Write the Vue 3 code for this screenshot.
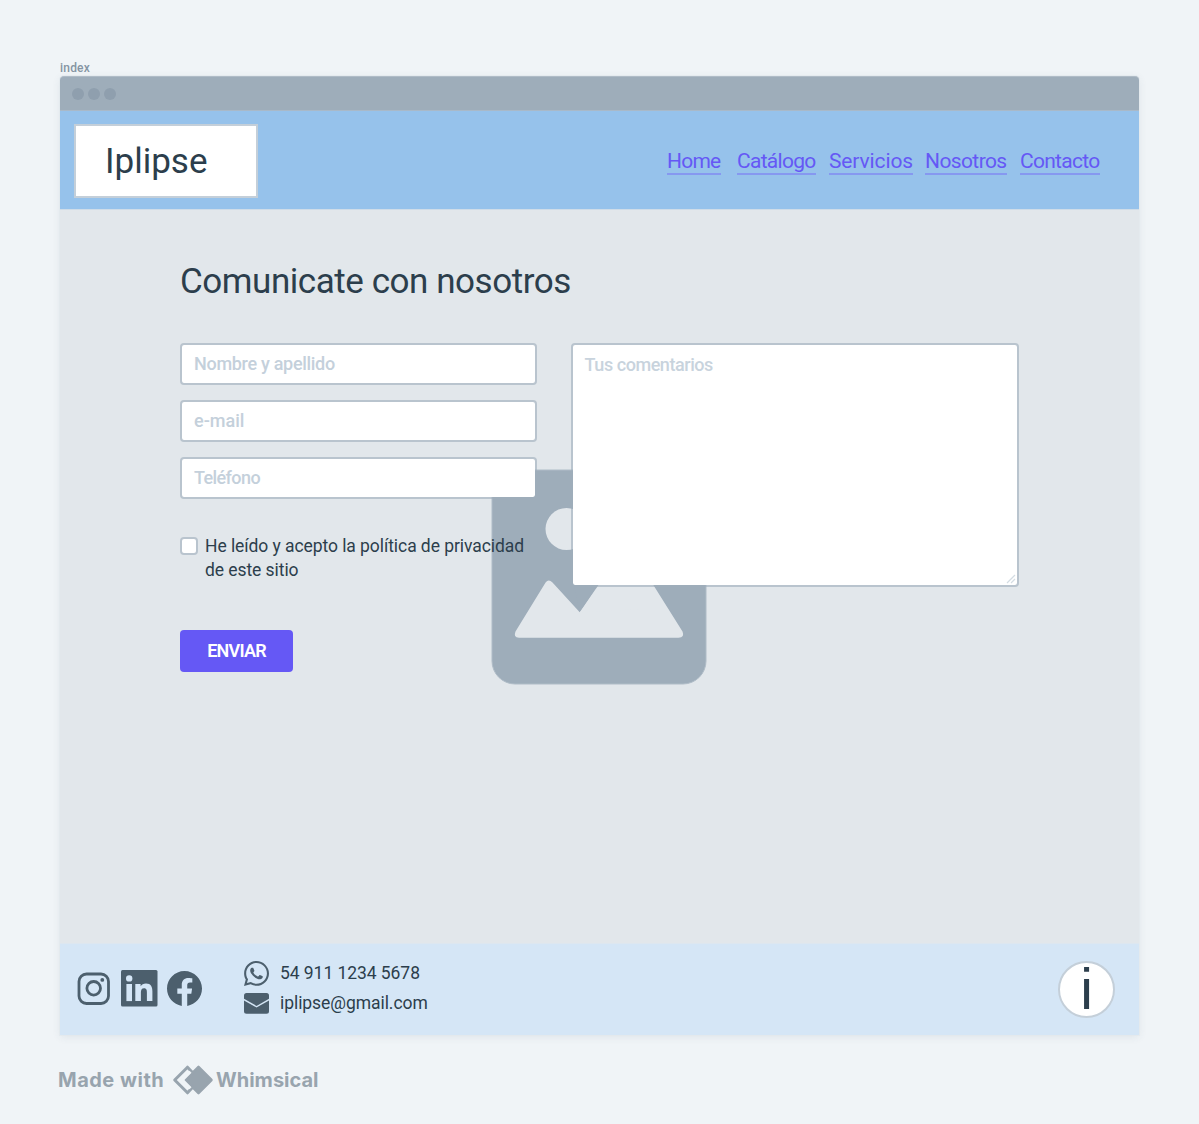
<script setup>
const links = [
  { label: 'Home', width: 54, gap: 16, spacing: -0.75 },
  { label: 'Catálogo', width: 79, gap: 13, spacing: -0.7 },
  { label: 'Servicios', width: 84, gap: 12, spacing: -0.12 },
  { label: 'Nosotros', width: 82, gap: 13, spacing: -0.6 },
  { label: 'Contacto', width: 80, gap: 0, spacing: -0.72 },
]
const fields = [
  { label: 'Nombre y apellido', spacing: -0.3 },
  { label: 'e-mail', spacing: 0 },
  { label: 'Teléfono', spacing: -0.6 },
]
</script>

<template>
  <div class="canvas">
    <div class="frame-label">index</div>
    <div class="window">
      <div class="titlebar"><i></i><i></i><i></i></div>
      <header class="header">
        <div class="brand"><span>Iplipse</span></div>
        <nav class="nav">
          <a
            v-for="l in links"
            :key="l.label"
            :style="{ width: l.width + 'px', marginRight: l.gap + 'px', letterSpacing: l.spacing + 'px' }"
          >{{ l.label }}</a>
        </nav>
      </header>

      <main class="main">
        <svg class="placeholder" width="216" height="216" viewBox="0 0 216 216">
          <rect x="1" y="1" width="214" height="214" rx="23" fill="#9eadba" stroke="#afbcc7" stroke-width="1" />
          <circle cx="75.500" cy="60" r="21" fill="#e2e7eb" />
          <path
            d="M54.600 113.500 L24.500 162.500 Q22 168.500 28 168.700 H187.500 Q194 168.500 191.500 162.500 L146 90 Q142 86 138 90 L88.500 143 L61.500 113.500 Q57.500 109.500 54.600 113.500Z"
            fill="#e2e7eb"
          />
          <path d="M88.500 143.500 L127 85 H150 L150 140Z" fill="#e2e7eb" />
          <path d="M88.500 143.200 L107.500 116 V100 H80 Z" fill="#9eadba" />
        </svg>
        <h1>Comunicate con nosotros</h1>
        <form class="form" @submit.prevent>
          <div class="left">
            <div v-for="f in fields" :key="f.label" class="field">
              <span :style="{ letterSpacing: f.spacing + 'px' }">{{ f.label }}</span>
            </div>
            <div class="consent">
              <span class="box"></span>
              <p>He leído y acepto la política de privacidad<br />de este sitio</p>
            </div>
            <button class="send" type="submit">ENVIAR</button>
          </div>
          <div class="comments">
            <span>Tus comentarios</span>
            <svg class="grip" width="10" height="10" viewBox="0 0 10 10">
              <path d="M1 9 L9 1 M5 9 L9 5" stroke="#d3dce3" stroke-width="1.200" fill="none" />
            </svg>
          </div>
        </form>
      </main>

      <footer class="footer">
        <div class="social">
          <svg class="instagram" width="33" height="33" viewBox="0 0 33 33" fill="none" stroke="#4c5f6d" stroke-width="2.800">
            <rect x="2" y="2" width="29.500" height="29.500" rx="7.500" />
            <circle cx="16.700" cy="16.300" r="6.800" />
            <circle cx="25.300" cy="7.900" r="1.900" fill="#4c5f6d" stroke="none" />
          </svg>
          <svg class="linkedin" width="37" height="37" viewBox="0 0 37 37">
            <rect width="36.500" height="36.500" rx="1.500" fill="#4c5f6d" />
            <g fill="#d5e6f6">
              <circle cx="8.200" cy="8.400" r="3.200" />
              <path d="M5.400 14H11V31.100H5.400Z" />
              <path d="M14.300 14H19.600V16.300C20.500 14.700 22.500 13.500 25 13.500C30 13.500 31.400 16.800 31.400 21.500V31.100H25.900V22.700C25.900 20.600 25.700 18.300 23.100 18.300C20.500 18.300 19.900 20.300 19.900 22.600V31.100H14.300Z" />
            </g>
          </svg>
          <svg class="facebook" width="35" height="35" viewBox="0 0 24 24">
            <path
              fill="#4c5f6d"
              d="M24 12.073c0-6.627-5.373-12-12-12s-12 5.373-12 12c0 5.990 4.388 10.954 10.125 11.854v-8.385H7.078v-3.470h3.047V9.430c0-3.007 1.792-4.669 4.533-4.669 1.312 0 2.686.235 2.686.235v2.953H15.830c-1.491 0-1.956.925-1.956 1.874v2.250h3.328l-.532 3.470h-2.796v8.385C19.612 23.027 24 18.062 24 12.073z"
            />
          </svg>
        </div>
        <div class="contact">
          <div class="line">
            <svg width="25" height="25" viewBox="0 0 448 448">
              <path
                fill="#4c5f6d"
                transform="translate(0 -32)"
                d="M380.900 97.100C339 55.100 283.200 32 223.900 32c-122.400 0-222 99.600-222 222 0 39.100 10.200 77.300 29.600 111L0 480l117.700-30.900c32.400 17.700 68.900 27 106.100 27h.1c122.300 0 224.100-99.600 224.100-222 0-59.300-25.200-115-67.100-157zm-157 341.600c-33.200 0-65.700-8.900-94-25.700l-6.700-4-69.800 18.300L72 359.200l-4.400-7c-18.500-29.400-28.200-63.300-28.200-98.200 0-101.700 82.800-184.500 184.600-184.500 49.300 0 95.600 19.200 130.400 54.100 34.800 34.900 56.200 81.200 56.100 130.500 0 101.800-84.900 184.600-186.600 184.600zm101.200-138.200c-5.500-2.800-32.800-16.200-37.900-18-5.100-1.900-8.800-2.800-12.500 2.800-3.700 5.600-14.300 18-17.600 21.800-3.200 3.700-6.500 4.200-12 1.400-32.600-16.300-54-29.100-75.500-66-5.700-9.800 5.700-9.100 16.300-30.300 1.800-3.700.9-6.900-.5-9.700-1.400-2.800-12.500-30.100-17.100-41.200-4.500-10.800-9.100-9.300-12.500-9.500-3.200-.2-6.900-.2-10.600-.2-3.700 0-9.700 1.400-14.800 6.900-5.100 5.600-19.400 19-19.400 46.300 0 27.300 19.900 53.700 22.600 57.400 2.800 3.700 39.100 59.700 94.800 83.800 35.200 15.200 49 16.500 66.600 13.900 10.700-1.600 32.800-13.400 37.400-26.400 4.600-13 4.600-24.100 3.200-26.400-1.300-2.500-5-3.900-10.500-6.600z"
              />
            </svg>
            <span>54 911 1234 5678</span>
          </div>
          <div class="line">
            <svg width="25" height="21" viewBox=".5 0 25 21">
              <path fill="#4c5f6d" d="M.500 5.800V2.500Q.500 0 3 0H23Q25.500 0 25.500 2.500V5.800L13 12.900Z" />
              <path fill="#4c5f6d" d="M.500 7.500L13 14.500L25.500 7.500V18.200Q25.500 20.700 23 20.700H3Q.500 20.700 .500 18.200Z" />
            </svg>
            <span>iplipse@gmail.com</span>
          </div>
        </div>
        <div class="info"><span>i</span></div>
      </footer>
    </div>

    <div class="credit">
      <span class="made">Made with</span>
      <svg width="42" height="32" viewBox="0 0 42 32">
        <path d="M15.500 3.200L2.700 16L15.500 28.800L27.500 16Z" fill="none" stroke="#98a4ae" stroke-width="3" stroke-linejoin="round" />
        <path d="M26.500 2.800L39.500 16L26.500 29.200L13.500 16Z" fill="#98a4ae" stroke="#98a4ae" stroke-width="2.500" stroke-linejoin="round" />
        <path d="M17.500 6.800L8.500 16L17.500 25.200L19.500 23.200L12.300 16L19.500 8.800Z" fill="#f0f4f7" />
      </svg>
      <span class="whimsical">Whimsical</span>
    </div>
  </div>
</template>

<style>
body { background: #f0f4f7; }
</style>

<style scoped>
* { box-sizing: border-box; }
.canvas {
  width: 1199px;
  height: 1124px;
  padding: 60px 60px 0;
  background: #f0f4f7;
  color: #2c3e4c;
  font-family: Roboto, "Liberation Sans", sans-serif;
  overflow: hidden;
}
.frame-label {
  height: 16px;
  line-height: 16px;
  font-size: 12px;
  font-weight: 500;
  letter-spacing: 0.2px;
  color: #8595a3;
}
.window {
  width: 1079px;
  height: 959px;
  display: flex;
  flex-direction: column;
  border-radius: 4px 4px 0 0;
  box-shadow: 0 0 0 1px rgba(225, 231, 236, 0.6), 0 2px 8px rgba(60, 80, 100, 0.09);
}
.titlebar {
  height: 35px;
  display: flex;
  align-items: center;
  gap: 4px;
  padding-left: 12px;
  background: #9eadba;
  border-top: 1px solid #b0bcc7;
  border-bottom: 1px solid #a9b9c8;
  border-radius: 4px 4px 0 0;
}
.titlebar i {
  width: 12px;
  height: 12px;
  border-radius: 50%;
  background: #8f9fae;
}
.header {
  height: 98px;
  display: flex;
  justify-content: space-between;
  align-items: flex-start;
  padding: 13px 39px 0 14px;
  background: #96c2eb;
}
.brand {
  width: 184px;
  height: 74px;
  padding-left: 29px;
  border: 2px solid #c4cfd9;
  background: #fff;
  font-size: 35px;
  line-height: 71px;
}
.nav { display: flex; margin-top: 23px; }
.nav a {
  height: 28px;
  border-bottom: 2px solid #8698f0;
  color: #6558f5;
  font-size: 21px;
  line-height: 28px;
  white-space: nowrap;
}
.main {
  position: relative;
  height: 735px;
  padding: 48px 120px 0;
  background: #e2e7eb;
  border-top: 1px solid #cfdce8;
  border-bottom: 1px solid #dde7f0;
}
.placeholder {
  position: absolute;
  left: 431px;
  top: 259px;
}
h1 {
  margin: 0;
  height: 85px;
  font-size: 35px;
  font-weight: 400;
  line-height: 47px;
  letter-spacing: -0.45px;
}
.form {
  position: relative;
  display: flex;
  gap: 34px;
}
.left { width: 357px; }
.field {
  height: 42px;
  margin-bottom: 15px;
  padding-left: 12px;
  border: 2px solid rgba(158, 173, 186, 0.6);
  border-radius: 4px;
  background: #fff;
  background-clip: padding-box;
  color: #c4d0db;
  font-size: 18px;
  font-weight: 500;
  line-height: 38px;
}
.consent {
  display: flex;
  align-items: flex-start;
  margin-top: 36px;
}
.box {
  width: 18px;
  height: 18px;
  margin-top: 2px;
  border: 2px solid #b9c4ce;
  border-radius: 4px;
  background: #fff;
}
.consent p {
  margin: -1px 0 0 7px;
  font-size: 17.5px;
  line-height: 24px;
  letter-spacing: -0.07px;
  white-space: nowrap;
}
.send {
  display: block;
  width: 113px;
  height: 42px;
  margin-top: 48px;
  padding: 0;
  border: 0;
  border-radius: 4px;
  background: #6558f5;
  color: #fff;
  font: 600 18px/42px Roboto, sans-serif;
  letter-spacing: -0.8px;
}
.comments {
  position: relative;
  width: 449px;
  height: 244px;
  padding: 8px 12px;
  border: 2px solid rgba(158, 173, 186, 0.6);
  border-radius: 4px;
  background: #fff;
  background-clip: padding-box;
  color: #c8d3dd;
  font-size: 18px;
  font-weight: 500;
  line-height: 24px;
  letter-spacing: -0.45px;
}
.grip {
  position: absolute;
  right: 1px;
  bottom: 1px;
}
.footer {
  height: 91px;
  display: flex;
  align-items: flex-start;
  padding: 0 24px 0 17px;
  background: #d5e6f6;
}
.social {
  width: 167px;
  height: 88px;
  display: flex;
  align-items: center;
}
.linkedin { margin-left: 11px; }
.facebook { margin-left: 9px; }
.contact { padding-top: 14px; }
.line {
  height: 30px;
  display: flex;
  align-items: center;
  gap: 11px;
  font-size: 17.5px;
  letter-spacing: -0.06px;
}
.info {
  width: 57px;
  height: 57px;
  margin: 17px 0 0 auto;
  border: 2px solid #c4cfd9;
  border-radius: 50%;
  background: #fff;
  text-align: center;
  font-family: "Liberation Sans", Arial, sans-serif;
  font-size: 57px;
  line-height: 53px;
}
.credit {
  height: 32px;
  display: flex;
  align-items: center;
  margin-top: 29px;
  color: #98a4ae;
  font-family: Inter, sans-serif;
  font-size: 20px;
  font-weight: 700;
}
.made { width: 114px; margin-left: -2px; letter-spacing: 0.5px; white-space: nowrap; }
.whimsical { margin-left: 2px; }
</style>
